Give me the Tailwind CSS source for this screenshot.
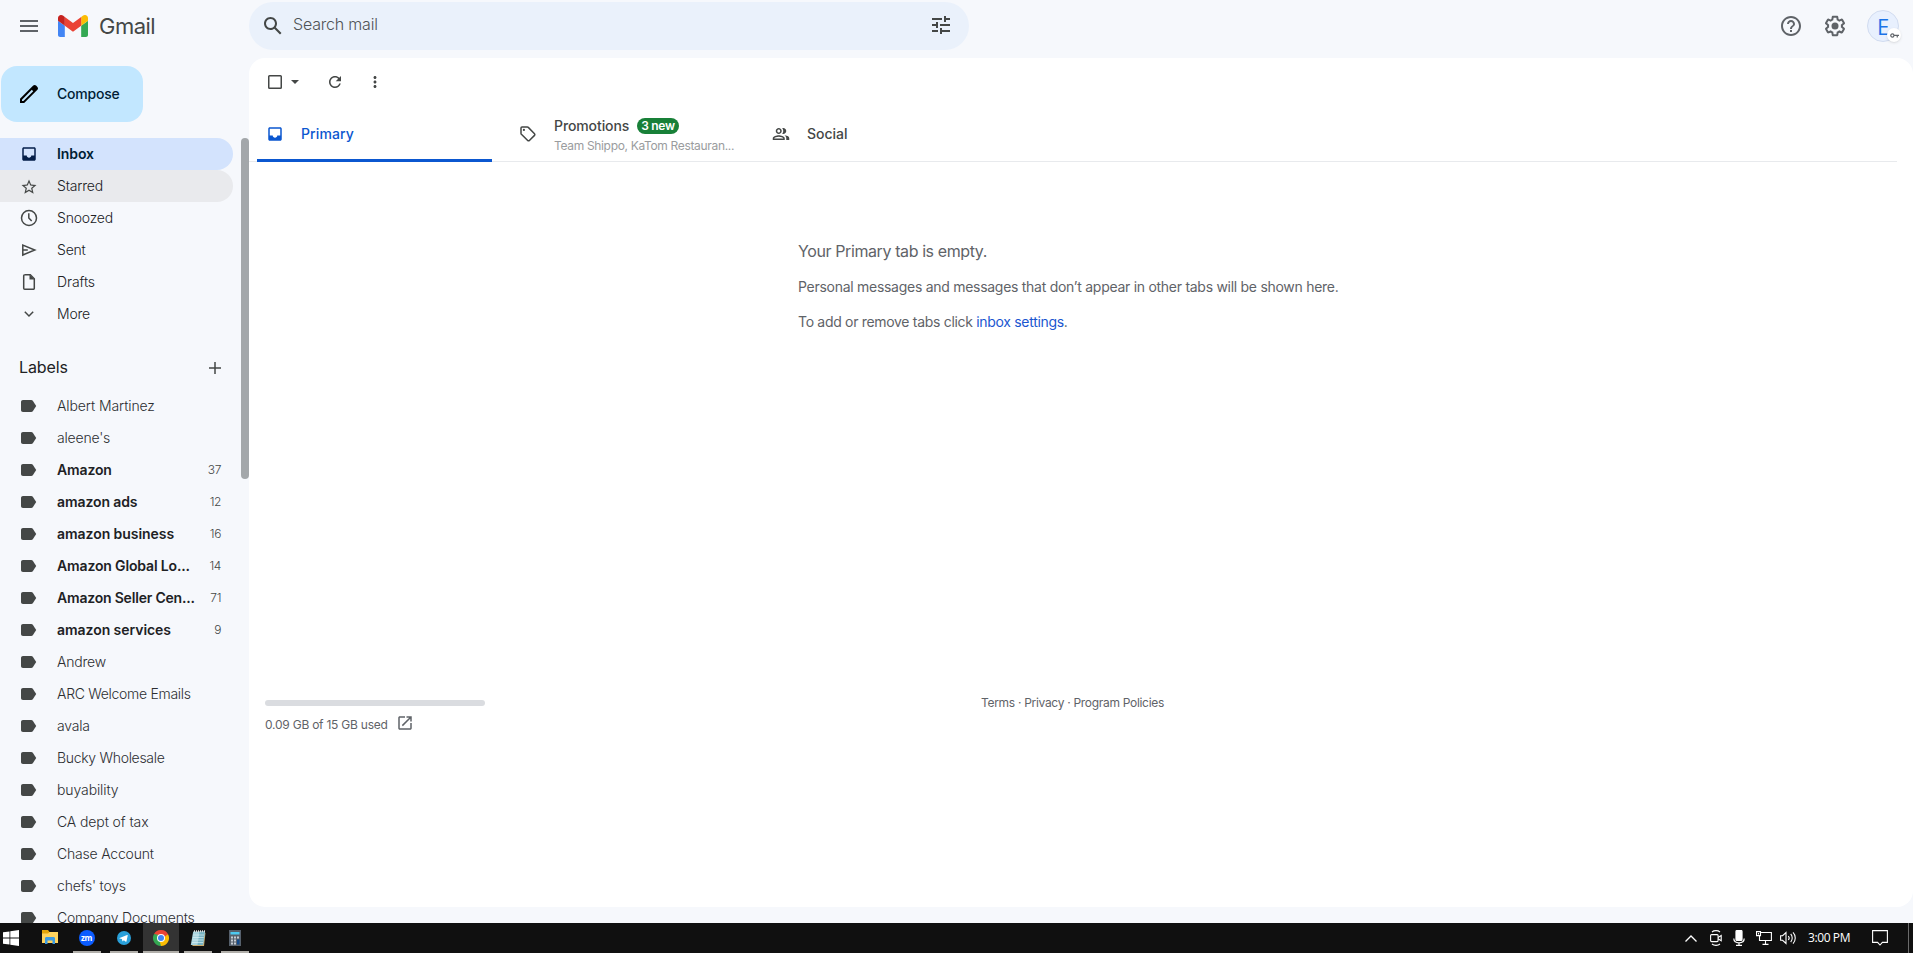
<!DOCTYPE html>
<html lang="en">
<head>
  <meta charset="utf-8">
  <title>Gmail</title>
  <script src="https://cdn.jsdelivr.net/npm/@tailwindcss/browser@4"></script>
</head>
<body class="h-screen overflow-hidden bg-[#f6f8fc] font-['Inter',sans-serif] text-[#202124] flex flex-col">

  <!-- shared icons -->
  <svg class="hidden">
    <symbol id="label" viewBox="0 0 22 22"><path d="M3 15V7c0-1.200.8-2 2-2h8.200c.7 0 1.200.3 1.600.8L18.200 11l-3.400 5.200c-.4.500-.9.800-1.600.8H5c-1.200 0-2-.8-2-2z"/></symbol>
    <symbol id="inbox" viewBox="0 0 24 24"><path d="M19 3H5c-1.100 0-2 .9-2 2v14c0 1.100.9 2 2 2h14c1.100 0 2-.9 2-2V5c0-1.100-.9-2-2-2zm0 11h-4c0 1.660-1.350 3-3 3s-3-1.340-3-3H5V5h14v9z"/></symbol>
  </svg>

  <div class="flex-1 min-h-0 flex flex-col">
    <header class="h-[58px] shrink-0 flex items-start">
      <div class="w-[249px] h-[52px] flex items-center pl-5">
        <svg class="w-[18px] h-3" viewBox="0 0 18 12" fill="#5f6368"><path d="M0 0h18v2H0zM0 5h18v2H0zM0 10h18v2H0z"/></svg>
        <svg class="ml-5 w-[30px] h-[22px]" viewBox="52 42 88 66" preserveAspectRatio="none">
          <path fill="#4285f4" d="M58 108h14V74L52 59v43c0 3.320 2.690 6 6 6"/>
          <path fill="#34a853" d="M120 108h14c3.320 0 6-2.690 6-6V59l-20 15"/>
          <path fill="#fbbc04" d="M120 48v26l20-15v-8c0-7.420-8.470-11.650-14.400-7.200"/>
          <path fill="#ea4335" d="M72 74V48l24 18 24-18v26L96 92"/>
          <path fill="#c5221f" d="M52 51v8l20 15V48l-5.600-4.200c-5.940-4.450-14.400-.22-14.400 7.200"/>
        </svg>
        <span class="ml-[11px] text-[22px] tracking-[-0.5px] text-[#444746]">Gmail</span>
      </div>
      <div class="mt-0.5 w-[720px] h-12 rounded-full bg-[#eaf1fb] flex items-center pl-3 pr-4">
        <svg class="w-6 h-6" viewBox="0 0 24 24" fill="#444746"><path d="M20.490 19l-5.730-5.730C15.530 12.200 16 10.910 16 9.500 16 5.910 13.090 3 9.500 3S3 5.910 3 9.500 5.910 16 9.500 16c1.410 0 2.700-.47 3.770-1.240L19 20.490 20.490 19zM5 9.500C5 7.010 7.010 5 9.500 5S14 7.010 14 9.500 11.990 14 9.500 14 5 11.990 5 9.500z"/></svg>
        <span class="ml-2 -mt-[5px] flex-1 text-base font-light tracking-[-0.2px] text-[#505356]">Search mail</span>
        <svg class="w-6 h-6 -mt-0.5" viewBox="0 0 24 24" fill="#444746"><path d="M3 17v2h6v-2H3zM3 5v2h10V5H3zm10 16v-2h8v-2h-8v-2h-2v6h2zM7 9v2H3v2h4v2h2V9H7zm14 4v-2H11v2h10zm-6-4h2V7h4V5h-4V3h-2v6z"/></svg>
      </div>
      <div class="ml-auto h-[52px] flex items-center pr-[14px]">
        <svg class="w-6 h-6" viewBox="0 0 24 24" fill="#5f6368"><path d="M11 18h2v-2h-2v2zm1-16C6.480 2 2 6.480 2 12s4.480 10 10 10 10-4.480 10-10S17.520 2 12 2zm0 18c-4.410 0-8-3.590-8-8s3.590-8 8-8 8 3.590 8 8-3.590 8-8 8zm0-14c-2.210 0-4 1.790-4 4h2c0-1.100.9-2 2-2s2 .9 2 2c0 2-3 1.750-3 5h2c0-2.250 3-2.500 3-5 0-2.210-1.790-4-4-4z"/></svg>
        <svg class="ml-5 w-6 h-6" viewBox="0 0 24 24" fill="#5f6368"><path d="M13.850 22.250h-3.700c-.74 0-1.360-.54-1.450-1.270l-.27-1.890c-.27-.14-.53-.29-.79-.46l-1.800.72c-.7.26-1.470-.03-1.810-.65L2.200 15.530c-.35-.66-.2-1.440.36-1.880l1.530-1.190c-.01-.15-.02-.3-.02-.46 0-.15.010-.31.020-.46l-1.520-1.190c-.59-.45-.74-1.260-.37-1.880l1.850-3.190c.34-.62 1.110-.9 1.790-.63l1.810.73c.26-.17.520-.32.780-.46l.27-1.910c.09-.7.710-1.250 1.440-1.250h3.700c.74 0 1.360.54 1.450 1.270l.27 1.890c.27.14.530.29.790.46l1.800-.72c.71-.26 1.480.03 1.820.65l1.840 3.180c.36.660.2 1.440-.36 1.880l-1.520 1.190c.01.15.020.3.020.46s-.01.31-.02.46l1.520 1.190c.56.450.72 1.230.37 1.860l-1.860 3.220c-.34.620-1.110.9-1.800.63l-1.800-.72c-.26.17-.52.32-.78.46l-.27 1.910c-.1.680-.72 1.220-1.460 1.220zm-3.230-2h2.760l.37-2.550.53-.22c.44-.18.880-.44 1.340-.78l.45-.34 2.380.96 1.380-2.400-2.030-1.580.07-.56c.03-.26.060-.51.060-.78s-.03-.53-.06-.78l-.07-.56 2.030-1.580-1.390-2.400-2.390.96-.45-.35c-.42-.32-.87-.58-1.330-.77l-.52-.22-.37-2.550h-2.760l-.37 2.550-.53.210c-.44.190-.88.440-1.340.79l-.45.330-2.380-.95-1.390 2.390 2.030 1.580-.07.56c-.03.260-.06.530-.06.790s.02.530.06.780l.07.56-2.030 1.580 1.380 2.400 2.390-.96.450.35c.43.330.86.580 1.330.77l.53.22.38 2.550z"/><circle cx="12" cy="12" r="3.500"/></svg>
        <div class="relative ml-5 w-8 h-8 rounded-full bg-[#e8f0fe] border border-[#d2dcf0] flex items-center justify-center text-[22px] text-[#1a73e8]">
          <span class="font-['Open_Sans',sans-serif]">E</span>
          <div class="absolute left-[19px] top-[17px] w-[14px] h-[14px] rounded-full bg-white shadow flex items-center justify-center">
            <svg class="w-[9px] h-[5px]" viewBox="0 0 18 10" fill="none" stroke="#5f6368" stroke-width="2.400"><circle cx="4.700" cy="5" r="3.200"/><path d="M8 4.600h10M14.500 4.600v4.600"/></svg>
          </div>
        </div>
      </div>
    </header>

    <div class="flex-1 min-h-0 flex">
      <!-- sidebar -->
      <aside class="w-[249px] shrink-0 flex flex-col pt-2 overflow-hidden">
        <button class="ml-px w-[142px] h-14 shrink-0 rounded-2xl bg-[#c2e7ff] text-[#001d35] flex items-center pl-4">
          <svg class="w-6 h-6" viewBox="0 0 24 24" fill="#000"><path d="M20.410 4.940l-1.350-1.350c-.78-.78-2.050-.78-2.830 0L3 16.820V21h4.180L20.410 7.770c.79-.78.790-2.050 0-2.830zm-14 14.120L5 19v-1.360l9.820-9.820 1.410 1.410-9.820 9.830z"/></svg>
          <span class="ml-4 text-sm font-medium tracking-[-0.2px]">Compose</span>
        </button>

        <div class="mt-4 flex-1 min-h-0 flex">
          <div class="w-[233px] shrink-0 overflow-hidden text-sm">
            <nav class="text-[#202124] font-light">
              <a class="h-8 rounded-r-full bg-[#d3e3fd] text-[#001d35] font-semibold flex items-center pl-5">
                <svg class="w-[18px] h-[18px] mr-[19px]" fill="#041e49"><use href="#inbox"/></svg>
                <span class="tracking-[-0.1px]">Inbox</span>
              </a>
              <a class="h-8 rounded-r-full bg-[#e9eaed] flex items-center pl-5">
                <svg class="w-[18px] h-[18px] mr-[19px] mt-0.5" viewBox="0 0 24 24" fill="#444746"><path d="M22 9.240l-7.190-.62L12 2 9.190 8.630 2 9.240l5.460 4.730L5.820 21 12 17.270 18.180 21l-1.630-7.030L22 9.240zM12 15.400l-3.760 2.270 1-4.280-3.320-2.880 4.380-.38L12 6.100l1.710 4.040 4.380.38-3.320 2.880 1 4.280L12 15.400z"/></svg>
                <span class="tracking-[-0.2px]">Starred</span>
              </a>
              <a class="h-8 flex items-center pl-5">
                <svg class="w-[18px] h-[18px] mr-[19px]" viewBox="0 0 18 18" fill="none" stroke="#444746" stroke-width="1.500"><circle cx="9" cy="9" r="7.500"/><path d="M8.800 4.300V9l2.900 3.100"/></svg>
                <span class="tracking-[-0.2px]">Snoozed</span>
              </a>
              <a class="h-8 flex items-center pl-5">
                <svg class="w-[18px] h-[18px] mr-[19px]" viewBox="0 0 18 18" fill="none" stroke="#444746" stroke-width="1.500"><path d="M2.800 4v10L14.800 9zM2.800 9h5"/></svg>
                <span class="tracking-[-0.2px]">Sent</span>
              </a>
              <a class="h-8 flex items-center pl-5">
                <svg class="w-[18px] h-[18px] mr-[19px]" viewBox="0 0 18 18" fill="none" stroke="#444746" stroke-width="1.500"><path d="M4.500 1.800h5.800l4 4v9.400a1 1 0 01-1 1H4.700a1 1 0 01-1-1V2.800a1 1 0 011-1z"/><path fill="#444746" stroke="none" d="M9.500 1.500v5h5z"/></svg>
                <span class="tracking-[-0.1px]">Drafts</span>
              </a>
              <a class="h-8 flex items-center pl-5">
                <svg class="w-[18px] h-[18px] mr-[19px]" viewBox="0 0 18 18" fill="none" stroke="#444746" stroke-width="1.500"><path d="M4.800 6.800L9 11l4.200-4.200"/></svg>
                <span class="tracking-[-0.2px]">More</span>
              </a>
            </nav>

            <div class="h-[60px] pt-6 flex items-start justify-between pl-[19px] pr-3">
              <h2 class="text-base leading-6 tracking-[-0.1px] mt-px">Labels</h2>
              <svg class="w-3 h-3 mt-2" viewBox="0 0 12 12" fill="#444746"><path d="M5.250 0h1.500v5.250H12v1.500H6.750V12h-1.500V6.750H0v-1.500h5.250z"/></svg>
            </div>

            <nav class="text-[#2c2e31] font-light">
              <a class="h-8 flex items-center pl-[18px] pr-3"><svg class="w-[22px] h-[22px] mr-[17px] shrink-0" fill="#444746"><use href="#label"/></svg><span class="tracking-[-0.1px]">Albert Martinez</span></a>
              <a class="h-8 flex items-center pl-[18px] pr-3"><svg class="w-[22px] h-[22px] mr-[17px] shrink-0" fill="#444746"><use href="#label"/></svg><span class="tracking-[-0.2px]">aleene's</span></a>
              <a class="h-8 flex items-center pl-[18px] pr-3 text-[#202124]"><svg class="w-[22px] h-[22px] mr-[17px] shrink-0" fill="#444746"><use href="#label"/></svg><span class="font-semibold tracking-[-0.15px]">Amazon</span><span class="ml-auto text-xs tracking-[-0.4px] text-[#444746]">37</span></a>
              <a class="h-8 flex items-center pl-[18px] pr-3 text-[#202124]"><svg class="w-[22px] h-[22px] mr-[17px] shrink-0" fill="#444746"><use href="#label"/></svg><span class="font-semibold tracking-[-0.1px]">amazon ads</span><span class="ml-auto text-xs tracking-[-0.4px] text-[#444746]">12</span></a>
              <a class="h-8 flex items-center pl-[18px] pr-3 text-[#202124]"><svg class="w-[22px] h-[22px] mr-[17px] shrink-0" fill="#444746"><use href="#label"/></svg><span class="font-semibold tracking-[-0.05px]">amazon business</span><span class="ml-auto text-xs tracking-[-0.4px] text-[#444746]">16</span></a>
              <a class="h-8 flex items-center pl-[18px] pr-3 text-[#202124]"><svg class="w-[22px] h-[22px] mr-[17px] shrink-0" fill="#444746"><use href="#label"/></svg><span class="font-semibold tracking-[-0.15px]">Amazon Global Lo...</span><span class="ml-auto text-xs tracking-[-0.4px] text-[#444746]">14</span></a>
              <a class="h-8 flex items-center pl-[18px] pr-3 text-[#202124]"><svg class="w-[22px] h-[22px] mr-[17px] shrink-0" fill="#444746"><use href="#label"/></svg><span class="font-semibold tracking-[-0.2px]">Amazon Seller Cen...</span><span class="ml-auto text-xs tracking-[-0.4px] text-[#444746]">71</span></a>
              <a class="h-8 flex items-center pl-[18px] pr-3 text-[#202124]"><svg class="w-[22px] h-[22px] mr-[17px] shrink-0" fill="#444746"><use href="#label"/></svg><span class="font-semibold tracking-[-0.05px]">amazon services</span><span class="ml-auto text-xs tracking-[-0.4px] text-[#444746]">9</span></a>
              <a class="h-8 flex items-center pl-[18px] pr-3"><svg class="w-[22px] h-[22px] mr-[17px] shrink-0" fill="#444746"><use href="#label"/></svg><span class="tracking-[-0.2px]">Andrew</span></a>
              <a class="h-8 flex items-center pl-[18px] pr-3"><svg class="w-[22px] h-[22px] mr-[17px] shrink-0" fill="#444746"><use href="#label"/></svg><span class="tracking-[-0.3px]">ARC Welcome Emails</span></a>
              <a class="h-8 flex items-center pl-[18px] pr-3"><svg class="w-[22px] h-[22px] mr-[17px] shrink-0" fill="#444746"><use href="#label"/></svg><span class="tracking-[-0.2px]">avala</span></a>
              <a class="h-8 flex items-center pl-[18px] pr-3"><svg class="w-[22px] h-[22px] mr-[17px] shrink-0" fill="#444746"><use href="#label"/></svg><span class="tracking-[-0.3px]">Bucky Wholesale</span></a>
              <a class="h-8 flex items-center pl-[18px] pr-3"><svg class="w-[22px] h-[22px] mr-[17px] shrink-0" fill="#444746"><use href="#label"/></svg><span class="tracking-[-0.1px]">buyability</span></a>
              <a class="h-8 flex items-center pl-[18px] pr-3"><svg class="w-[22px] h-[22px] mr-[17px] shrink-0" fill="#444746"><use href="#label"/></svg><span class="tracking-[-0.1px]">CA dept of tax</span></a>
              <a class="h-8 flex items-center pl-[18px] pr-3"><svg class="w-[22px] h-[22px] mr-[17px] shrink-0" fill="#444746"><use href="#label"/></svg><span class="tracking-[-0.2px]">Chase Account</span></a>
              <a class="h-8 flex items-center pl-[18px] pr-3"><svg class="w-[22px] h-[22px] mr-[17px] shrink-0" fill="#444746"><use href="#label"/></svg><span class="tracking-[-0.2px]">chefs' toys</span></a>
              <a class="h-8 flex items-center pl-[18px] pr-3"><svg class="w-[22px] h-[22px] mr-[17px] shrink-0" fill="#444746"><use href="#label"/></svg><span class="tracking-[-0.2px]">Company Documents</span></a>
            </nav>
          </div>
          <!-- scrollbar thumb -->
          <div class="ml-2 w-2 h-[341px] rounded-full bg-[#a3a7aa]"></div>
        </div>
      </aside>

      <main class="flex-1 h-[849px] rounded-2xl bg-white flex flex-col">
        <div class="h-12 flex items-center pl-[19px]">
          <svg class="w-[14px] h-[14px]" viewBox="0 0 14 14" fill="none" stroke="#444746" stroke-width="1.500"><rect x=".75" y=".75" width="12.500" height="12.500" rx=".8"/></svg>
          <svg class="ml-[9px] w-2 h-1" viewBox="0 0 8 4" fill="#444746"><path d="M0 0h8L4 4z"/></svg>
          <svg class="ml-[27px] w-[18px] h-[18px]" viewBox="0 0 24 24" fill="#444746"><path d="M17.650 6.350C16.200 4.900 14.210 4 12 4c-4.420 0-7.990 3.580-7.990 8s3.570 8 7.990 8c3.730 0 6.840-2.550 7.730-6h-2.080c-.82 2.330-3.040 4-5.650 4-3.310 0-6-2.690-6-6s2.690-6 6-6c1.660 0 3.140.69 4.220 1.780L13 11h7V4l-2.350 2.350z"/></svg>
          <svg class="ml-[22px] w-[18px] h-[18px]" viewBox="0 0 24 24" fill="#444746"><path d="M12 8c1.100 0 2-.9 2-2s-.9-2-2-2-2 .9-2 2 .9 2 2 2zm0 2c-1.100 0-2 .9-2 2s.9 2 2 2 2-.9 2-2-.9-2-2-2zm0 6c-1.100 0-2 .9-2 2s.9 2 2 2 2-.9 2-2-.9-2-2-2z"/></svg>
        </div>

        <div class="h-14 mr-4 pl-2 flex border-b border-[#e8eaed] text-sm font-medium text-[#444746]">
          <div class="w-[235px] mr-[18px] h-14 border-b-[3px] border-[#0b57d0] text-[#0b57d0] flex items-center pl-[9px] pt-[3px]">
            <svg class="w-[18px] h-[18px]" fill="#0b57d0"><use href="#inbox"/></svg>
            <span class="ml-[17px] tracking-[0.1px]">Primary</span>
          </div>
          <div class="w-[253px] flex items-center pl-[9px]">
            <svg class="w-[18px] h-[18px]" viewBox="0 0 18 18" fill="none" stroke="#444746" stroke-width="1.500"><path d="M2 3a1 1 0 011-1h5.200a1.500 1.500 0 011.100.4l6.200 6.300a1.200 1.200 0 010 1.700l-5.100 5.100a1.200 1.200 0 01-1.700 0L2.400 9.300A1.500 1.500 0 012 8.200z"/><circle cx="4.900" cy="4.900" r="1.100" fill="#444746" stroke="none"/></svg>
            <div class="ml-[17px] pt-1">
              <div class="flex items-center h-5">
                <span class="tracking-[-0.1px]">Promotions</span>
                <span class="ml-2 h-4 px-1 rounded-full bg-[#188038] text-white text-xs leading-4 font-semibold tracking-[-0.3px]">3 new</span>
              </div>
              <div class="text-xs leading-5 font-normal tracking-[-0.33px] text-[#9a9c9e]">Team Shippo, KaTom Restauran...</div>
            </div>
          </div>
          <div class="flex items-center pl-[9px]">
            <svg class="w-[18px] h-[18px]" viewBox="0 0 24 24" fill="#444746"><path d="M9 12c2.210 0 4-1.790 4-4s-1.790-4-4-4-4 1.790-4 4 1.790 4 4 4zm0-6c1.100 0 2 .9 2 2s-.9 2-2 2-2-.9-2-2 .9-2 2-2zm0 7.500c-2.670 0-8 1.340-8 4V20h16v-2.500c0-2.660-5.330-4-8-4zm6 4.500H3v-.5c.2-.7 3.300-2 6-2s5.800 1.300 6 2v.5zM15 12c2.210 0 4-1.790 4-4s-1.790-4-4-4c-.47 0-.91.1-1.330.24A5.980 5.980 0 0115 8a5.980 5.980 0 01-1.330 3.760c.42.14.860.24 1.330.24zm1.660 2.130C18.030 14.930 19 16.050 19 17.500V20h4v-2.500c0-1.830-2.520-3-5.340-3.370z"/></svg>
            <span class="ml-[17px]">Social</span>
          </div>
        </div>

        <div class="flex-1 pl-[549px] pt-[77px] text-sm text-[#5f6368]">
          <p class="text-base leading-6 tracking-[-0.4px]">Your Primary tab is empty.</p>
          <p class="mt-[14px] leading-5 tracking-[-0.28px]">Personal messages and messages that don’t appear in other tabs will be shown here.</p>
          <p class="mt-[15px] leading-5 tracking-[-0.31px]">To add or remove tabs click <a class="text-[#1a56d0]">inbox settings</a>.</p>
        </div>

        <footer class="h-[214px] pl-4 flex items-start text-xs text-[#5f6368]">
          <div class="w-[716px] pt-[7px]">
            <div class="w-[220px] h-1.5 rounded-full bg-[#dadce0]"></div>
            <div class="mt-[7px] flex items-center">
              <span class="mt-1 tracking-[-0.23px]">0.09 GB of 15 GB used</span>
              <svg class="ml-2 w-[18px] h-[18px]" viewBox="0 0 24 24" fill="#5f6368"><path d="M19 19H5V5h7V3H5c-1.110 0-2 .9-2 2v14c0 1.100.89 2 2 2h14c1.100 0 2-.9 2-2v-7h-2v7zM14 3v2h3.590l-9.830 9.830 1.410 1.410L19 6.410V10h2V3h-7z"/></svg>
            </div>
          </div>
          <div class="pt-0.5 leading-4 tracking-[-0.3px]">Terms · Privacy · Program Policies</div>
        </footer>
      </main>
    </div>
  </div>

  <!-- taskbar -->
  <div class="h-[30px] shrink-0 bg-[#101010] flex items-stretch justify-between font-['Open_Sans',sans-serif]">
    <div class="flex">
      <div class="pl-[3px] w-[31px] flex items-center"><svg class="w-4 h-4" viewBox="0 0 16 16" fill="#fff"><path d="M0 2.300l6.500-.9v6.200H0zM7.300 1.200L16 0v7.600H7.300zM0 8.400h6.500v6.200L0 13.700zM7.300 8.400H16V16l-8.700-1.200z"/></svg></div>
      <div class="w-[37px] pb-0.5 flex items-center justify-center"><svg class="w-4 h-[14px]" viewBox="0 0 16 14"><path fill="#e5a50a" d="M0 0h6l1.500 2H16v3H0z"/><path fill="#ffd35c" d="M0 3.500h6L7.500 2H16v11H0z"/><path fill="#3e9be0" d="M3 8.500C3 7.700 3.500 7 4.500 7h7c1 0 1.500.7 1.500 1.500V14h-2.500v-3.500h-5V14H3z"/></svg></div>
      <div class="w-[37px] pt-0.5 flex items-center justify-center border-b-2 border-transparent relative after:absolute after:left-[5px] after:top-7 after:w-7 after:h-0.5 after:bg-[#b1afaa]">
        <div class="w-4 h-4 rounded-full bg-[#0b5cff] text-white text-[8px] leading-[15px] font-bold text-center tracking-[-0.3px]">zm</div>
      </div>
      <div class="w-[37px] pt-0.5 flex items-center justify-center border-b-2 border-transparent relative after:absolute after:left-[5px] after:top-7 after:w-7 after:h-0.5 after:bg-[#b1afaa]">
        <svg class="w-[14px] h-[14px]" viewBox="0 0 24 24"><circle cx="12" cy="12" r="12" fill="#29a0da"/><path fill="#fff" d="M4.500 11.900l12.900-5.100c.7-.2 1.200.2 1 1.100l-2.200 9.900c-.1.700-.7.900-1.200.6l-3.300-2.500-1.700 1.700c-.4.300-.6.100-.7-.2l-.9-3.500-3.900-1.200c-.6-.2-.6-.6 0-.8z"/></svg>
      </div>
      <div class="w-9 ml-px pt-0.5 flex items-center justify-center bg-[#333] border-b-2 border-[#b1afaa]">
        <svg class="w-4 h-4" viewBox="0 0 48 48"><path fill="#ea4335" d="M24 24L3.200 12A24 24 0 0144.800 12z"/><path fill="#34a853" d="M24 24v24A24 24 0 013.200 12z"/><path fill="#fbbc04" d="M24 24L44.800 12A24 24 0 0124 48z"/><path fill="#ea4335" d="M24 12h20.800L34 22z"/><path fill="#34a853" d="M13.600 30L3.200 12 20 16z"/><path fill="#fbbc04" d="M34.400 30L24 48l-4-14z"/><circle cx="24" cy="24" r="12" fill="#fff"/><circle cx="24" cy="24" r="9" fill="#4285f4"/></svg>
      </div>
      <div class="w-[37px] pt-0.5 flex items-center justify-center border-b-2 border-transparent relative after:absolute after:left-[5px] after:top-7 after:w-7 after:h-0.5 after:bg-[#b1afaa]">
        <svg class="w-4 h-4" viewBox="0 0 16 16"><path fill="#c9a96a" d="M14 2l1.500 1-1.500 13H2z"/><path fill="#a9d5df" d="M3.200 1.500H15L13 15H.8z"/><path fill="#78b4c4" d="M9.500 1.500H15L13 15H7.500z"/><path stroke="#e6f5f8" stroke-width=".6" d="M3 5h11M2.700 7.500h11M2.300 10h11M2 12.500h11"/><path stroke="#ddd" stroke-dasharray="1 1" stroke-width="2" d="M4 1.200h11"/></svg>
      </div>
      <div class="w-[37px] pt-0.5 flex items-center justify-center border-b-2 border-transparent relative after:absolute after:left-[5px] after:top-7 after:w-7 after:h-0.5 after:bg-[#b1afaa]">
        <svg class="w-3 h-4" viewBox="0 0 12 16"><path fill="#56606c" d="M0 0h12v16H0z"/><path fill="#4cc9f0" d="M1.500 2h9v2.500h-9z"/><path fill="#c5ccd3" d="M2 6.500h2v2H2zM5 6.500h2v2H5zM8 6.500h2v2H8zM2 9.500h2v2H2zM5 9.500h2v2H5zM2 12.500h2v2H2zM5 12.500h2v2H5z"/><path fill="#124a8c" d="M8 9.500h2.500v5H8z"/></svg>
      </div>
    </div>

    <div class="flex items-center text-white text-xs">
      <svg class="w-3 h-[7px]" viewBox="0 0 12 7" fill="none" stroke="#fff" stroke-width="1.300"><path d="M.5 6.500L6 1l5.500 5.500"/></svg>
      <svg class="ml-[13px] w-3 h-4" viewBox="0 0 12 16" fill="none" stroke="#fff" stroke-width="1.100"><path d="M2 2C4 .2 8 .2 10 2M2 14c2 1.800 6 1.800 8 0"/><rect x=".6" y="4.600" width="7.500" height="7" rx="1"/><path d="M8 7.500l3.200-2v5.200L8 8.700"/></svg>
      <svg class="ml-[11px] w-3 h-4" viewBox="0 0 12 16" fill="none" stroke="#fff" stroke-width="1.200"><rect x="3" y=".5" width="6" height="10" rx="1" fill="#fff"/><path d="M.8 8.500c0 3 2 4.300 5.200 4.300s5.200-1.300 5.200-4.300M6 13v2.400M3 15.400h6"/></svg>
      <svg class="ml-[11px] w-4 h-[14px]" viewBox="0 0 16 14" fill="none" stroke="#fff" stroke-width="1.100"><path d="M5 1.500h10.400v8H3.500V5M9.500 9.500v3.500M6.500 13.400h6M.5.6h4v4h-4zM2.500 2v1.500"/></svg>
      <svg class="ml-2 w-4 h-[14px]" viewBox="0 0 16 14" fill="none" stroke="#fff" stroke-width="1.100"><path d="M.6 4.700h2L6 1.500v11L2.600 9.300h-2zM8.300 5c.9 1 .9 3 0 4M10.700 3c2 2 2 6 0 8M13 1.300c3 3 3 8.400 0 11.400"/></svg>
      <span class="ml-[12px] w-[42px] tracking-[-0.4px] whitespace-nowrap">3:00 PM</span>
      <svg class="ml-[22px] w-4 h-4" viewBox="0 0 16 16" fill="none" stroke="#fff" stroke-width="1.100"><path d="M.6.600h14.800v11.800h-5L8 15l-2.400-2.600h-5z"/></svg>
      <div class="ml-5 mr-1 w-px h-[30px] bg-[#6b6b6b]"></div>
    </div>
  </div>
</body>
</html>
